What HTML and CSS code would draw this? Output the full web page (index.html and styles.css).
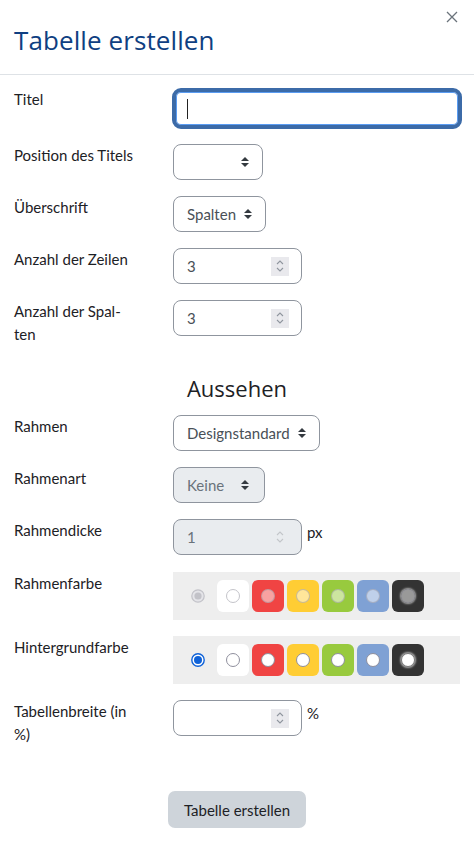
FILE: index.html
```html
<!DOCTYPE html>
<html lang="de">
<head>
<meta charset="utf-8">
<title>Tabelle erstellen</title>
<link rel="stylesheet" href="styles.css">
</head>
<body>
<div class="dialog">
  <div class="header">
    <h1 class="title">Tabelle erstellen</h1>
    <button class="close" aria-label="Schließen">
      <svg width="12" height="12" viewBox="0 0 12 12"><path d="M1 1 L11 11 M11 1 L1 11" stroke="#6a737b" stroke-width="1.3" fill="none"/></svg>
    </button>
  </div>
  <div class="form">
    <div class="row first">
      <div class="label">Titel</div>
      <div class="text-input focus"><span class="caret"></span></div>
    </div>
    <div class="row">
      <div class="label">Position des Titels</div>
      <div class="select w90"><span></span><svg class="arrow" width="8" height="12" viewBox="0 0 8 12"><path d="M0 5 L4 1 L8 5 Z M0 7 L4 11 L8 7 Z" fill="#343a40"/></svg></div>
    </div>
    <div class="row">
      <div class="label">Überschrift</div>
      <div class="select w93"><span>Spalten</span><svg class="arrow" width="8" height="12" viewBox="0 0 8 12"><path d="M0 5 L4 1 L8 5 Z M0 7 L4 11 L8 7 Z" fill="#343a40"/></svg></div>
    </div>
    <div class="row">
      <div class="label">Anzahl der Zeilen</div>
      <div class="number"><span>3</span><span class="spin"><svg width="10" height="14" viewBox="0 0 10 14"><path d="M2 5 L5 2 L8 5 M2 9 L5 12 L8 9" stroke="#8f959e" stroke-width="1.1" fill="none"/></svg></span></div>
    </div>
    <div class="row">
      <div class="label">Anzahl der Spal-<br>ten</div>
      <div class="number"><span>3</span><span class="spin"><svg width="10" height="14" viewBox="0 0 10 14"><path d="M2 5 L5 2 L8 5 M2 9 L5 12 L8 9" stroke="#8f959e" stroke-width="1.1" fill="none"/></svg></span></div>
    </div>

    <h2 class="section">Aussehen</h2>

    <div class="row">
      <div class="label">Rahmen</div>
      <div class="select w147"><span>Designstandard</span><svg class="arrow" width="8" height="12" viewBox="0 0 8 12"><path d="M0 5 L4 1 L8 5 Z M0 7 L4 11 L8 7 Z" fill="#343a40"/></svg></div>
    </div>
    <div class="row">
      <div class="label">Rahmenart</div>
      <div class="select w92 disabled"><span>Keine</span><svg class="arrow" width="8" height="12" viewBox="0 0 8 12"><path d="M0 5 L4 1 L8 5 Z M0 7 L4 11 L8 7 Z" fill="#343a40"/></svg></div>
    </div>
    <div class="row wide">
      <div class="label">Rahmendicke</div>
      <div class="number disabled"><span>1</span><span class="spin plain"><svg width="10" height="14" viewBox="0 0 10 14"><path d="M2 5 L5 2 L8 5 M2 9 L5 12 L8 9" stroke="#c3c6ca" stroke-width="1.1" fill="none"/></svg></span></div>
      <div class="unit">px</div>
    </div>
    <div class="row">
      <div class="label">Rahmenfarbe</div>
      <div class="colors faded">
        <svg class="radio" width="14" height="14" viewBox="0 0 14 14"><circle cx="7" cy="7" r="6.2" fill="#e4e4e8" stroke="#c2c2c8" stroke-width="1.2"/><circle cx="7" cy="7" r="3.6" fill="#c2c2c8"/></svg>
        <div class="swatch white"><span class="dot"></span></div>
        <div class="swatch red"><span class="dot"></span></div>
        <div class="swatch yellow"><span class="dot"></span></div>
        <div class="swatch green"><span class="dot"></span></div>
        <div class="swatch blue"><span class="dot"></span></div>
        <div class="swatch black"><span class="dot"></span></div>
      </div>
    </div>
    <div class="row">
      <div class="label">Hintergrundfarbe</div>
      <div class="colors">
        <svg class="radio" width="14" height="14" viewBox="0 0 14 14"><circle cx="7" cy="7" r="6.2" fill="#fff" stroke="#0f62d8" stroke-width="1.4"/><circle cx="7" cy="7" r="4" fill="#0f62d8"/></svg>
        <div class="swatch white"><span class="dot"></span></div>
        <div class="swatch red"><span class="dot"></span></div>
        <div class="swatch yellow"><span class="dot"></span></div>
        <div class="swatch green"><span class="dot"></span></div>
        <div class="swatch blue"><span class="dot"></span></div>
        <div class="swatch black"><span class="dot"></span></div>
      </div>
    </div>
    <div class="row">
      <div class="label">Tabellenbreite (in<br>%)</div>
      <div class="number"><span></span><span class="spin"><svg width="10" height="14" viewBox="0 0 10 14"><path d="M2 5 L5 2 L8 5 M2 9 L5 12 L8 9" stroke="#8f959e" stroke-width="1.1" fill="none"/></svg></span></div>
      <div class="unit">%</div>
    </div>

    <div class="actions">
      <button class="submit">Tabelle erstellen</button>
    </div>
  </div>
</div>
</body>
</html>
```
FILE: styles.css
```css
* { box-sizing: border-box; }
html, body { margin: 0; padding: 0; background: #fff; }
body {
  font-family: Lato, "Noto Sans", "Liberation Sans", sans-serif;
  font-size: 15px;
  color: #1d2125;
  width: 474px;
  height: 842px;
  overflow: hidden;
}
.dialog { width: 474px; }
.header {
  height: 75px;
  border-bottom: 1px solid #dee2e6;
  position: relative;
  padding: 24px 0 0 14px;
}
.title {
  margin: 0;
  font-family: "Open Sans", "Noto Sans", sans-serif;
  font-weight: 400;
  font-size: 26px;
  line-height: 32px;
  color: #0f3f82;
  letter-spacing: 0.1px;
}
.close {
  position: absolute;
  top: 11px;
  right: 16px;
  border: 0;
  background: none;
  padding: 0;
  width: 12px;
  height: 12px;
  display: flex;
}
.form { padding: 13px 0 0 0; }
.row {
  display: flex;
  align-items: flex-start;
  margin-bottom: 16px;
}
.row.first { margin-bottom: 15px; }
.row.wide { margin-bottom: 17px; }
.label {
  width: 173px;
  flex: none;
  padding-left: 14px;
  line-height: 23px;
  white-space: nowrap;
}
.text-input {
  width: 290px;
  height: 41px;
  border-radius: 9px;
  border: 4px solid #3c6ba8;
  box-shadow: inset 0 0 0 1px #5a9cf2;
  margin-left: -1px;
  display: flex;
  align-items: center;
  padding-left: 11px;
}
.caret {
  width: 1px;
  height: 20px;
  background: #222;
}
.select, .number {
  height: 36px;
  border: 1px solid #8f959e;
  border-radius: 8px;
  display: flex;
  align-items: center;
  justify-content: space-between;
  padding: 0 13px 0 13px;
  color: #495057;
  background: #fff;
}
.select .arrow { flex: none; }
.w90 { width: 90px; }
.w92 { width: 92px; padding-right: 15px; }
.w93 { width: 93px; }
.w147 { width: 147px; }
.disabled { background: #e9ecef; color: #6a737b; }
.number { width: 129px; padding-right: 12px; }
.spin {
  width: 18px;
  height: 19px;
  background: #e9e9ed;
  display: flex;
  align-items: center;
  justify-content: center;
}
.spin.plain { background: transparent; }
.unit {
  margin-left: 5px;
  line-height: 23px;
  padding-top: 2px;
}
.section {
  margin: 29px 0 14px 0;
  text-align: center;
  font-family: "Open Sans", "Noto Sans", sans-serif;
  font-weight: 400;
  font-size: 22px;
  line-height: 26px;
  color: #1d2125;
}
.colors {
  width: 287px;
  height: 48px;
  background: #eeeeee;
  display: flex;
  align-items: center;
  gap: 3px;
  padding-left: 18px;
}
.colors .radio { margin-right: 9px; flex: none; }
.swatch {
  width: 32px;
  height: 32px;
  border-radius: 6px;
  display: flex;
  align-items: center;
  justify-content: center;
  flex: none;
}
.white { background: #ffffff; }
.red { background: #f04443; }
.yellow { background: #ffcd34; }
.green { background: #98ca3e; }
.blue { background: #7fa1d4; }
.black { background: #333333; }
.dot {
  width: 14px;
  height: 14px;
  border-radius: 50%;
  background: #fff;
  border: 1px solid #8f8f9d;
}
.black .dot { box-shadow: 0 0 2px 1px rgba(255,255,255,0.6); border-color: #777; }
.faded .dot { background: rgba(255,255,255,0.5); border-color: rgba(143,143,157,0.5); }
.faded .white .dot { background: #fff; border-color: #c4c4ca; }
.actions {
  display: flex;
  justify-content: center;
  padding-top: 29px;
}
.submit {
  font-family: Lato, "Noto Sans", sans-serif;
  font-size: 15px;
  color: #1d2125;
  background: #ced4da;
  border: 0;
  border-radius: 7px;
  width: 138px;
  height: 37px;
  padding: 0;
}
```
